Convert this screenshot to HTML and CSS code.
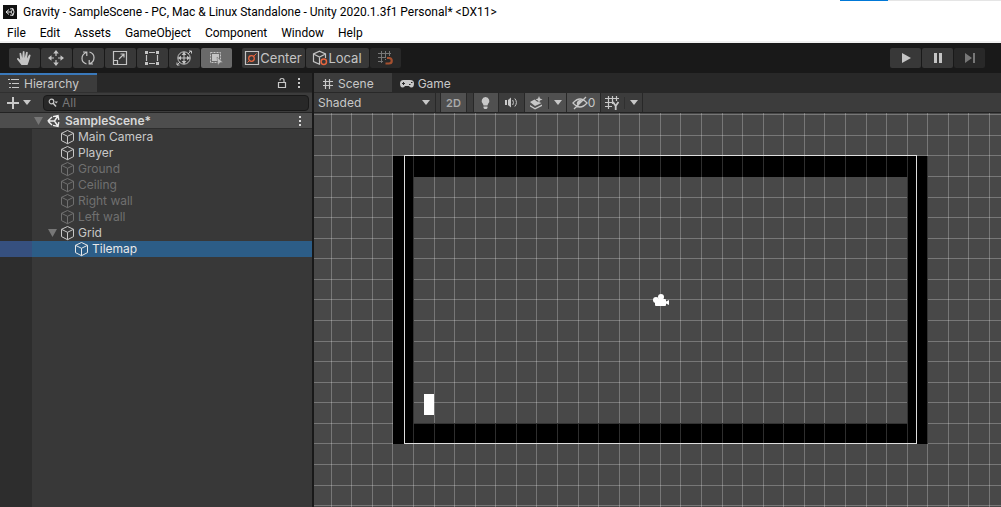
FILE: index.html
```html
<!DOCTYPE html>
<html lang="en">
<head>
<meta charset="utf-8">
<title>Gravity - SampleScene</title>
<link rel="stylesheet" href="styles.css">
</head>
<body>
<svg class="defs" aria-hidden="true">
  <symbol id="cube" viewBox="0 0 16 16"><path d="M7.500 1.500 13.500 4.300V11.600L7.500 14.700 1.500 11.600V4.300ZM1.500 4.300 7.500 7.300 13.500 4.300M7.500 7.300V14.700" fill="none" stroke="currentColor" stroke-linejoin="round"/></symbol>
  <symbol id="unity" viewBox="0 0 14 14"><path d="M.8 7 5 3M.8 7 5 11M1 7H7.500M7.500 7 10.500 2.500M7.500 7 10.500 11.500M6 2.600 11 1.500 11.800 5.800M6 11.400 11 12.500 11.800 8.200" fill="none" stroke="currentColor" stroke-width="1.400"/></symbol>
  <symbol id="dots" viewBox="0 0 4 12"><path d="M1 1h2v2H1zM1 5h2v2H1zM1 9h2v2H1z" fill="currentColor"/></symbol>
  <symbol id="down" viewBox="0 0 8 5"><path d="M0 0H8L4 5Z" fill="currentColor"/></symbol>
</svg>

<header class="window-bar">
  <div class="title">
    <svg class="app-icon" viewBox="0 0 14 14"><path d="M0 0h14v14H0z" fill="#111"/><path d="M3 7 6 4.500M3 7 6 9.500M3 7H8M8 7 10 4M8 7 10 10M7 4 10 3.500 11 7 10 10.500 7 10" fill="none" stroke="#ddd"/></svg>
    <span>Gravity - SampleScene - PC, Mac &amp; Linux Standalone - Unity 2020.1.3f1 Personal* &lt;DX11&gt;</span>
  </div>
  <div class="edge-strip"></div>
  <nav class="menu">
    <button>File</button><button>Edit</button><button>Assets</button><button>GameObject</button><button>Component</button><button>Window</button><button>Help</button>
  </nav>
</header>

<div class="toolbar">
  <div class="group">
    <button class="tool" aria-label="Hand"><svg viewBox="0 0 16 16"><path d="M5.500 15 1 9.200Q1 7.600 2.600 8.300L4.200 10 3.500 3.300Q4.200 2 5.200 3.300L6.200 8 6.800 1.500Q7.800.3 8.500 1.500L8.700 8 10 2.200Q11.200 1.200 11.800 2.500L11 8.500 13 4.800Q14.200 4 14.600 5.400L12.800 11.500 11.500 15Z" fill="currentColor"/></svg></button>
    <button class="tool" aria-label="Move"><svg viewBox="0 0 16 16"><path d="M8 1V6M8 10V15M1 8H6M10 8H15" stroke="currentColor" stroke-width="1.200"/><path d="M8 0 10.800 3.500H5.200ZM8 16 10.800 12.500H5.200ZM0 8 3.500 5.200V10.800ZM16 8 12.500 5.200V10.800Z" fill="currentColor"/></svg></button>
    <button class="tool" aria-label="Rotate"><svg viewBox="0 0 16 16"><path d="M6.500 14Q2 12.500 2 8.500 2 4 6.500 2.200M3 2H6.800V6M9.500 2Q14 3.500 14 7.500 14 12 9.500 13.800M13 14H9.200V10" fill="none" stroke="currentColor" stroke-width="1.200"/></svg></button>
    <button class="tool" aria-label="Scale"><svg viewBox="0 0 16 16"><path d="M1.500 1.500h13v13h-13zM1.500 10.500h4v4M7 9 12 4M8.500 4H12V7.500" fill="none" stroke="currentColor" stroke-width="1.200"/></svg></button>
    <button class="tool" aria-label="Rect"><svg viewBox="0 0 16 16"><path d="M5 2.500H11M5 13.500H11M2.500 5V11M13.500 5V11" stroke="currentColor" stroke-width="1.200"/><path d="M1 1h3v3H1zM12 1h3v3h-3zM1 12h3v3H1zM12 12h3v3h-3z" fill="currentColor"/></svg></button>
    <button class="tool" aria-label="Transform"><svg viewBox="0 0 16 16"><circle cx="8" cy="8" r="6.200" fill="none" stroke="currentColor"/><path d="M8 2V14M2 8H14M13 1H15.500V3.500M1 12.500V15H3.500M12 4 15 1M1 15 4 12" fill="none" stroke="currentColor"/><path d="M8 2 10.300 5H5.700ZM8 14 10.300 11H5.700ZM2 8 5 5.700V10.300ZM14 8 11 5.700V10.300Z" fill="currentColor"/></svg></button>
    <button class="tool on" aria-label="Custom tool"><svg viewBox="0 0 16 16"><path d="M2.500 2.500h10v10h-10z" fill="none" stroke="currentColor" stroke-dasharray="2 1"/><path d="M4 4h7v7H4z" fill="currentColor"/><path d="M9 7 15 12.500H12L10 15.500Z" fill="currentColor" stroke="#6a6a6a" stroke-width=".5"/></svg></button>
  </div>
  <div class="group">
    <button class="tool wide"><svg viewBox="0 0 16 16"><path d="M1.500 1.500h13v13h-13z" fill="none" stroke="currentColor" stroke-width="1.200"/><circle cx="7.500" cy="8.500" r="2.800" fill="none" stroke="#e8663f" stroke-width="1.300"/><path d="M9.500 6.500 12.500 3.500M5.500 10.500 3.500 12.500" stroke="#e8663f"/></svg>Center</button>
    <button class="tool wide"><svg viewBox="0 0 16 16"><path d="M8 14.500 1.500 11.500V4L7.500 1.200 13.500 4V8M1.500 4 7.500 7 13.500 4M7.500 7V14" fill="none" stroke="currentColor" stroke-width="1.200"/><circle cx="11.800" cy="11.800" r="2.700" fill="#383838" stroke="#e8663f" stroke-width="1.500"/></svg>Local</button>
    <button class="tool dim" aria-label="Grid snapping"><svg viewBox="0 0 16 16"><path d="M4.500 1V13M8.500 1V7M12.500 1V6M1 3.500H14M1 7.500H9M1 11.500H6M8.500 9v1" stroke="currentColor"/><path d="M10 8H12A2.600 2.600 0 0 1 12 13.500H8.500" fill="none" stroke="#a5502f" stroke-width="2.200"/></svg></button>
  </div>
  <div class="group play">
    <button class="tool" aria-label="Play"><svg viewBox="0 0 16 16"><path d="M4 3 13 8 4 13Z" fill="currentColor"/></svg></button>
    <button class="tool" aria-label="Pause"><svg viewBox="0 0 16 16"><path d="M4 3h3v10H4zM9 3h3v10H9z" fill="currentColor"/></svg></button>
    <button class="tool dim" aria-label="Step"><svg viewBox="0 0 16 16"><path d="M3 3 10 8 3 13ZM11 3h2v10h-2z" fill="currentColor"/></svg></button>
  </div>
</div>

<main class="panels">
  <section class="hierarchy">
    <div class="tabs">
      <button class="tab active focus"><svg class="i12" viewBox="0 0 12 12"><path d="M0 1.500h2M3 1.500h8M1 5.500h2M4 5.500h7M1 9.500h2M4 9.500h7" stroke="currentColor"/></svg>Hierarchy</button>
      <button class="plain lock" aria-label="Lock"><svg viewBox="0 0 10 12"><path d="M1.500 5.500h7v5h-7zM3 3.500Q3 1.500 5 1.500T7 3.500V5.500" fill="none" stroke="currentColor" stroke-width="1.200"/></svg></button>
      <button class="plain more" aria-label="Panel menu"><svg><use href="#dots"/></svg></button>
    </div>
    <div class="search-row">
      <button class="plain add" aria-label="Create"><svg class="plus" viewBox="0 0 12 12"><path d="M6 0V12M0 6H12" stroke="currentColor" stroke-width="2"/></svg><svg class="down"><use href="#down"/></svg></button>
      <label class="search"><svg viewBox="0 0 10 10"><circle cx="3.500" cy="3.500" r="2.300" fill="none" stroke="currentColor" stroke-width="1.200"/><path d="M5 5 8 8.500" stroke="currentColor" stroke-width="1.500"/><path d="M6.500 3.500h3.500L8.200 5.500Z" fill="currentColor"/></svg><input type="text" placeholder="All" aria-label="Search hierarchy"></label>
    </div>
    <div class="scene-row"><svg class="fold" viewBox="0 0 9 8"><path d="M0 0H9L4.500 8Z" fill="#777"/></svg><svg class="i14"><use href="#unity"/></svg><span>SampleScene*</span><button class="plain more" aria-label="Scene menu"><svg><use href="#dots"/></svg></button></div>
    <ul class="tree">
      <li><svg class="cube"><use href="#cube"/></svg>Main Camera</li>
      <li><svg class="cube"><use href="#cube"/></svg>Player</li>
      <li class="off"><svg class="cube"><use href="#cube"/></svg>Ground</li>
      <li class="off"><svg class="cube"><use href="#cube"/></svg>Ceiling</li>
      <li class="off"><svg class="cube"><use href="#cube"/></svg>Right wall</li>
      <li class="off"><svg class="cube"><use href="#cube"/></svg>Left wall</li>
      <li class="parent"><svg class="fold" viewBox="0 0 9 8"><path d="M0 0H9L4.500 8Z" fill="#777"/></svg><svg class="cube"><use href="#cube"/></svg>Grid</li>
      <li class="child selected"><svg class="cube"><use href="#cube"/></svg>Tilemap</li>
    </ul>
  </section>

  <section class="scene">
    <div class="tabs">
      <button class="tab active"><svg class="i12" viewBox="0 0 12 12"><path d="M3.500 1V11M7.500 1V11M1 3.500H11M1 7.500H11" stroke="currentColor" stroke-width="1.200"/></svg>Scene</button>
      <button class="tab"><svg class="pad" viewBox="0 0 14 10"><path d="M3.500 1H10.500A3.500 3.500 0 0 1 14 4.500Q14 8.500 11.500 8.500 10 8.500 9 7H5Q4 8.500 2.500 8.500 0 8.500 0 4.500A3.500 3.500 0 0 1 3.500 1Z" fill="currentColor"/><path d="M2 4.500h3M3.500 3v3M9 5.500h1.500M11 3.500h1.500" stroke="#282828"/></svg>Game</button>
    </div>
    <div class="scene-bar">
      <label class="shading"><select aria-label="Draw mode"><option>Shaded</option></select><svg class="down"><use href="#down"/></svg></label>
      <button class="opt on text2d">2D</button>
      <button class="opt on gap" aria-label="Lighting"><svg viewBox="0 0 14 14"><path d="M6.500 1A4 4 0 0 1 9 8L8.500 9.500H4.500L4 8A4 4 0 0 1 6.500 1ZM4.500 10.500h4V12L7.500 13H5.500L4.500 12Z" fill="currentColor"/></svg></button>
      <button class="opt" aria-label="Audio"><svg viewBox="0 0 14 14"><path d="M0 4h2v5H0zM3 4 6 1.500V11.500L3 9Z" fill="currentColor"/><path d="M7.700 4Q9.200 6.500 7.700 9M9.800 2.500Q13 6.500 9.800 10.500" fill="none" stroke="currentColor"/></svg></button>
      <button class="opt on effects" aria-label="Effects"><svg viewBox="0 0 14 14"><path d="M1 6 5.500 3.500 8 5.500 11 6.500 12.500 7 6 10ZM1 9 6 12 13 8.500V10L6 13.500 1 10.500Z" fill="currentColor"/><path d="M10 0 11 2.500 13.500 3.500 11 4.500 10 7 9 4.500 6.500 3.500 9 2.500Z" fill="currentColor"/></svg><i></i><svg class="down"><use href="#down"/></svg></button>
      <button class="opt on hidden-count"><svg viewBox="0 0 16 14"><path d="M1 7Q8-1 15 7 8 15 1 7ZM2 13 14 1" fill="none" stroke="currentColor" stroke-width="1.300"/><path d="M5 6Q7 3 10 4L6 10Q4 8 5 6Z" fill="currentColor"/></svg>0</button>
      <button class="opt grid-opt" aria-label="Grid axis Y"><svg viewBox="0 0 14 14"><path d="M3.500 0V13M7.500 0V8M11.500 0V5M0 2.500H14M0 6.500H8M0 10.500H7" stroke="currentColor" stroke-width="1.200"/><path d="M8 6 10.700 10 13.500 6M10.700 10V14" fill="none" stroke="currentColor" stroke-width="1.800"/></svg><i></i><svg class="down"><use href="#down"/></svg></button>
    </div>
    <div class="viewport">
      <svg class="world" aria-label="Scene view" shape-rendering="crispEdges">
        <defs>
          <pattern id="columns" x="78" y="0" width="144" height="144" patternUnits="userSpaceOnUse"><path d="M0 0h1v144h-1zM21 0h1v144h-1zM42 0h1v144h-1zM62 0h1v144h-1zM83 0h1v144h-1zM103 0h1v144h-1zM124 0h1v144h-1z" fill="#fff" fill-opacity=".26"/></pattern>
          <pattern id="rows" x="0" y="42" width="144" height="144" patternUnits="userSpaceOnUse"><path d="M0 0h144v1h-144zM0 21h144v1h-144zM0 42h144v1h-144zM0 62h144v1h-144zM0 83h144v1h-144zM0 103h144v1h-144zM0 124h144v1h-144z" fill="#fff" fill-opacity=".26"/></pattern>
        </defs>
        <rect width="100%" height="100%" fill="url(#rows)"/>
        <path d="M79 43H613V331H79ZM99 64V310H594V64Z" fill="#000" fill-rule="evenodd"/>
        <rect width="100%" height="100%" fill="url(#columns)"/>
        <path d="M79 43H613V331H79ZM99 64V310H594V64Z" fill="#000" fill-opacity=".3" fill-rule="evenodd"/>
        <path d="M99 64h1v246h-1zM593 64h1v246h-1zM613 43h1v288h-1zM99 310h495v1h-495z" fill="#333"/>
        <path d="M90 42H603V331H90ZM91 43V330H602V43Z" fill="#ddd" fill-rule="evenodd"/>
        <path d="M110 281h10v21h-10z" fill="#fff"/>
        <g fill="#fff" shape-rendering="auto"><circle cx="342" cy="187" r="3"/><circle cx="347" cy="184" r="3"/><rect x="341" y="186" width="11" height="7" rx="1"/><path d="M351 189 355 187V192L351 190Z"/></g>
      </svg>
    </div>
  </section>
</main>
</body>
</html>
```

FILE: styles.css
```css
* { box-sizing: border-box; }
body { margin: 0; height: 100vh; display: flex; flex-direction: column; overflow: hidden; background: #191919; color: #c8c8c8; font: 12px/16px Inter, "Liberation Sans", sans-serif; }
button, input, select { font: inherit; color: inherit; border: 0; background: none; padding: 0; margin: 0; }
svg { display: block; flex: none; }
.defs { position: absolute; width: 0; height: 0; }

.window-bar { position: relative; flex: none; background: #fff; color: #000; border-bottom: 2px solid #f0f0f0; font: 12px/16px Roboto, "Open Sans", sans-serif; }
.title { display: flex; align-items: center; gap: 6px; height: 24px; padding-left: 3px; white-space: nowrap; }
.app-icon { width: 14px; height: 14px; }
.edge-strip { position: absolute; top: 0; right: 0; width: 161px; height: 1px; background: linear-gradient(to right, #0078d7 48px, #e5e5e5 48px); }
.menu { display: flex; gap: 14px; height: 17px; padding-left: 7px; }

.toolbar { flex: none; display: flex; align-items: center; gap: 10px; height: 30px; padding: 0 16px 0 9px; }
.group { display: flex; gap: 1px; }
.play { margin-left: auto; }
.tool { display: flex; align-items: center; justify-content: center; width: 31px; height: 20px; padding-right: 1px; background: #383838; color: #c4c4c4; border-radius: 2px; }
.play .tool { padding-right: 0; }
.tool svg { width: 16px; height: 16px; }
.tool.on { background: #6a6a6a; }
.tool.wide { width: 63px; font-size: 13px; }
.tool.dim { background: #282828; color: #777; }

.panels { flex: 1; min-height: 0; display: flex; gap: 2px; }
.hierarchy { flex: none; width: 312px; display: flex; flex-direction: column; background: #383838; }
.tabs { flex: none; display: flex; align-items: center; height: 19px; background: #282828; }
.tab { display: flex; align-items: center; gap: 4px; height: 19px; padding: 0 18px 0 8px; border-top: 2px solid transparent; }
.tab.active { background: #3c3c3c; }
.tab.focus { border-top-color: #3a79bb; }
.i12 { width: 12px; height: 12px; }
.i14 { width: 14px; height: 14px; }
.pad { width: 14px; height: 10px; }
.down { width: 8px; height: 5px; }
.fold { width: 9px; height: 8px; }
.plain { display: flex; align-items: center; }
.lock { margin-left: auto; margin-right: 10px; }
.lock svg { width: 10px; height: 12px; }
.more { margin-right: 11px; }
.more svg { width: 4px; height: 12px; }
.search-row { flex: none; display: flex; align-items: center; gap: 12px; height: 21px; padding: 0 3px 0 7px; background: #3c3c3c; border-bottom: 1px solid #232323; border-top: 1px solid #303030; }
.add { gap: 4px; }
.plus { width: 12px; height: 12px; }
.search { flex: 1; display: flex; align-items: center; gap: 4px; height: 16px; padding-left: 4px; background: #282828; border: 1px solid #191919; border-radius: 4px; }
.search svg { width: 10px; height: 10px; }
.search input { flex: 1; min-width: 0; height: 14px; outline: 0; }
.search input::placeholder { color: #777; opacity: 1; }
.scene-row { flex: none; display: flex; align-items: center; height: 16px; padding-left: 34px; background: #4d4d4d; border-bottom: 1px solid #2d2d2d; color: #d8d8d8; font-weight: 600; }
.scene-row span { margin-left: 4px; }
.scene-row .i14 { margin-left: 4px; color: #eee; }
.scene-row .more { margin-left: auto; margin-right: 10px; }
.tree { flex: 1; margin: 0; padding: 0; list-style: none; background: linear-gradient(to right, #2d2d2d 32px, transparent 32px); }
.tree li { display: flex; align-items: center; gap: 2px; height: 16px; padding-left: 60px; }
.cube { width: 16px; height: 16px; }
.tree .off { color: #707070; }
.tree .parent { padding-left: 48px; }
.parent .cube { margin-left: 1px; }
.tree .child { padding-left: 74px; }
.tree .selected { background: linear-gradient(to right, #36507f 32px, #2c5d87 32px); color: #e8e8e8; }

.scene { flex: 1; min-width: 0; display: flex; flex-direction: column; }
.scene-bar { flex: none; display: flex; height: 21px; background: #3c3c3c; border-top: 1px solid #282828; border-bottom: 1px solid #232323; }
.shading { display: flex; align-items: center; width: 122px; padding: 0 5px 0 4px; border-right: 1px solid #282828; margin-right: 4px; }
.shading select { flex: 1; appearance: none; outline: 0; }
.opt { display: flex; align-items: center; justify-content: center; width: 26px; border-right: 1px solid #282828; }
.opt svg { width: 14px; height: 14px; }
.opt .down { width: 8px; height: 5px; }
.opt.on { background: #505050; }
.text2d { width: 27px; border-left: 1px solid #282828; font-size: 11px; font-weight: 600; color: #aaa; }
.gap { margin-left: 6px; border-left: 1px solid #282828; }
.effects, .grid-opt { width: 42px; gap: 5px; }
.opt i { width: 1px; height: 12px; background: #303030; }
.hidden-count { width: 34px; }
.hidden-count svg { width: 16px; }
.viewport { flex: 1; min-height: 0; background: #484848; }
.world { width: 100%; height: 100%; }
```
